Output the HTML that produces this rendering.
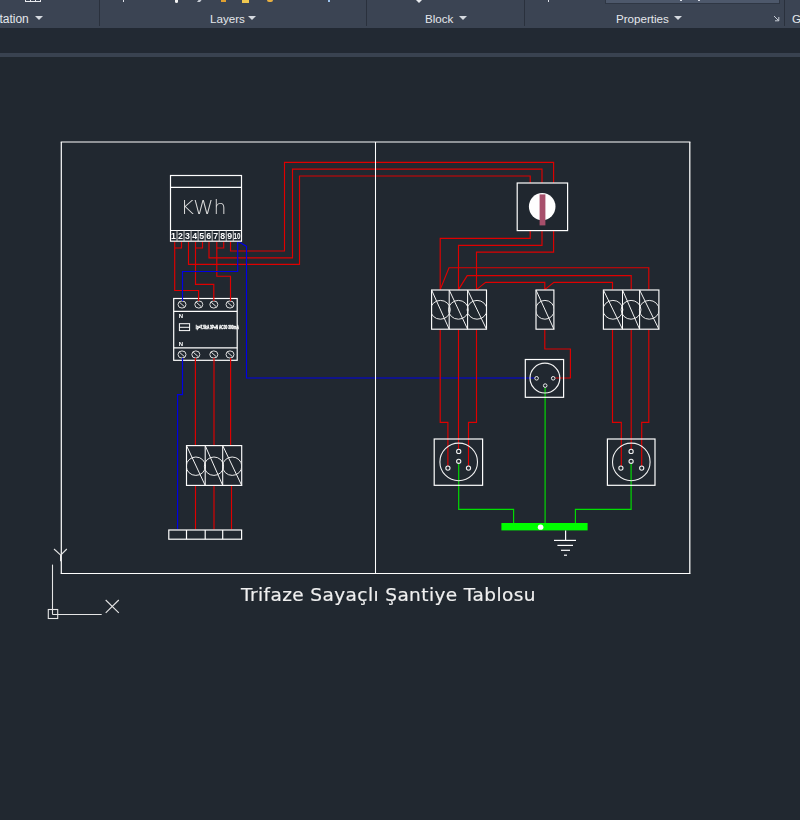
<!DOCTYPE html>
<html lang="tr"><head><meta charset="utf-8"><title>Trifaze Sayaçlı Şantiye Tablosu</title>
<style>
html,body{margin:0;padding:0}
body{width:800px;height:820px;overflow:hidden;background:#212830;position:relative;font-family:"Liberation Sans",sans-serif}
.rib{position:absolute;left:0;top:0;width:800px;height:28px;background:#3b4453}
.band{position:absolute;left:0;top:28px;width:800px;height:25px;background:#222933}
.strip{position:absolute;left:0;top:53px;width:800px;height:4px;background:#394250}
.lbl{position:absolute;top:10.5px;font-size:11.6px;line-height:16px;color:#e4e7ec;white-space:nowrap}
.arr{position:absolute;top:16px;width:0;height:0;border-left:4px solid transparent;border-right:4px solid transparent;border-top:4.5px solid #d6dae0}
.sep{position:absolute;top:0;width:1px;height:26px;background:#2a313d}
.ico{position:absolute;top:0}
</style></head><body>
<div class="rib">
<span class="lbl" style="left:-28.6px;font-size:12px">Annotation</span><i class="arr" style="left:35px"></i>
<div class="sep" style="left:99px"></div>
<span class="lbl" style="left:210px">Layers</span><i class="arr" style="left:248px"></i>
<div class="sep" style="left:366px"></div>
<span class="lbl" style="left:425px">Block</span><i class="arr" style="left:459px"></i>
<div class="sep" style="left:524px"></div>
<span class="lbl" style="left:616px">Properties</span><i class="arr" style="left:674px"></i>
<div class="sep" style="left:784px"></div>
<span class="lbl" style="left:792px">Groups</span>
<div class="ico" style="left:605px;width:175px;height:4px;background:#4d586b;border:1px solid #2f3744;border-top:0;box-sizing:border-box"></div>
<div class="ico" style="left:680px;width:2px;height:1px;background:#dfe3ea"></div>
<div class="ico" style="left:698px;width:2px;height:1px;background:#dfe3ea"></div>
<div class="ico" style="left:25px;width:16px;height:2px;border:1px solid #e8eaee;border-top:0;box-sizing:border-box"></div>
<div class="ico" style="left:30px;width:1px;height:1px;background:#e8eaee"></div><div class="ico" style="left:35px;width:1px;height:1px;background:#e8eaee"></div>
<div class="ico" style="left:123px;width:1px;height:2px;background:#dfe3ea"></div>
<div class="ico" style="left:175px;width:3px;height:3px;background:#f2f2f2;border-radius:0 0 2px 2px"></div>
<div class="ico" style="left:198px;width:3px;height:1.5px;background:#c9ced6;transform:skewX(-40deg)"></div>
<div class="ico" style="left:221px;width:5px;height:1.5px;background:#e0a030"></div>
<div class="ico" style="left:242px;width:7px;height:3px;background:#f0c850"></div>
<div class="ico" style="left:267px;width:6px;height:2px;background:#e8b040;border-radius:0 0 2px 2px"></div>
<div class="ico" style="left:328px;width:2px;height:1.5px;background:#9cc4f0"></div>
<div class="ico" style="left:416px;width:0;height:0;border-left:3px solid transparent;border-right:3px solid transparent;border-top:3px solid #e8eaee"></div>
<div class="ico" style="left:548px;width:1px;height:2px;background:#dfe3ea"></div>
<svg class="ico" style="left:773px;top:15px" width="7" height="7" viewBox="0 0 7 7"><path d="M1 1 L5.5 5.5 M5.8 2 V5.8 H2" fill="none" stroke="#c8cdd6" stroke-width="1"/></svg>
</div>
<div class="band"></div><div class="strip"></div>
<svg width="800" height="820" viewBox="0 0 800 820" style="position:absolute;left:0;top:0;will-change:transform;opacity:0.999">
<polyline points="230.5,241.6 230.5,251 284.5,251 284.5,162.3 553.6,162.3 553.6,183" fill="none" stroke="#e00000" stroke-width="1.15" />
<polyline points="209,241.6 209,257.9 292.5,257.9 292.5,169.1 542,169.1 542,183" fill="none" stroke="#e00000" stroke-width="1.15" />
<polyline points="188.5,241.6 188.5,264.4 299.5,264.4 299.5,176 530.2,176 530.2,183" fill="none" stroke="#e00000" stroke-width="1.15" />
<polyline points="174.7,241.6 174.7,290.5 198.6,290.5 198.6,298" fill="none" stroke="#e00000" stroke-width="1.15" />
<polyline points="181.5,241.6 181.5,248 174.7,248" fill="none" stroke="#e00000" stroke-width="1.15" />
<polyline points="195.5,241.6 195.5,284.3 213.8,284.3 213.8,298" fill="none" stroke="#e00000" stroke-width="1.15" />
<polyline points="202.5,241.6 202.5,248 195.5,248" fill="none" stroke="#e00000" stroke-width="1.15" />
<polyline points="216.8,241.6 216.8,276.2 230.5,276.2 230.5,298" fill="none" stroke="#e00000" stroke-width="1.15" />
<polyline points="223.7,241.6 223.7,248 216.8,248" fill="none" stroke="#e00000" stroke-width="1.15" />
<polyline points="237.7,241.6 237.7,271.5 182.5,271.5 182.5,298" fill="none" stroke="#0000e6" stroke-width="1.15" />
<polyline points="238.5,241.6 246.5,246.4 246.5,378 534.8,378" fill="none" stroke="#0000e6" stroke-width="1.15" />
<polyline points="182.5,360.6 182.5,394.6 177.6,394.6 177.6,529.6" fill="none" stroke="#0000e6" stroke-width="1.15" />
<polyline points="195.4,360.6 195.4,445" fill="none" stroke="#e00000" stroke-width="1.15" />
<polyline points="214,360.6 214,445" fill="none" stroke="#e00000" stroke-width="1.15" />
<polyline points="230.6,360.6 230.6,445" fill="none" stroke="#e00000" stroke-width="1.15" />
<polyline points="195.5,485.4 195.5,529.4" fill="none" stroke="#e00000" stroke-width="1.15" />
<polyline points="214,485.4 214,529.4" fill="none" stroke="#e00000" stroke-width="1.15" />
<polyline points="231.5,485.4 231.5,529.4" fill="none" stroke="#e00000" stroke-width="1.15" />
<polyline points="530.2,230.6 530.2,238.4 440.2,238.4 440.2,289.6" fill="none" stroke="#e00000" stroke-width="1.15" />
<polyline points="542,230.6 542,245.4 458.5,245.4 458.5,289.6" fill="none" stroke="#e00000" stroke-width="1.15" />
<polyline points="553.6,230.6 553.6,252.1 476.5,252.1 476.5,289.6" fill="none" stroke="#e00000" stroke-width="1.15" />
<polyline points="440.2,289.6 449,267.7 648.8,267.7 648.8,289.6" fill="none" stroke="#e00000" stroke-width="1.15" />
<polyline points="458.5,289.6 467.2,275.6 631.2,275.6 631.2,289.6" fill="none" stroke="#e00000" stroke-width="1.15" />
<polyline points="476.5,289.6 485.6,282.4 544.8,282.4 544.8,289.6 553.9,282.3 612.5,282.3 612.5,289.6" fill="none" stroke="#e00000" stroke-width="1.15" />
<polyline points="440.2,329.6 440.2,422.4 447.9,422.4 447.9,466" fill="none" stroke="#e00000" stroke-width="1.15" />
<polyline points="458.5,329.6 458.5,449.3" fill="none" stroke="#e00000" stroke-width="1.15" />
<polyline points="476.5,329.6 476.5,422.4 468.5,422.4 468.5,466" fill="none" stroke="#e00000" stroke-width="1.15" />
<polyline points="612.5,329.6 612.5,422.4 621.3,422.4 621.3,466" fill="none" stroke="#e00000" stroke-width="1.15" />
<polyline points="631.2,329.6 631.2,449.3" fill="none" stroke="#e00000" stroke-width="1.15" />
<polyline points="648.8,329.6 648.8,422.4 641.7,422.4 641.7,466" fill="none" stroke="#e00000" stroke-width="1.15" />
<polyline points="544.8,329.6 544.8,349 570.4,349 570.4,378 555.4,378" fill="none" stroke="#e00000" stroke-width="1.15" />
<polyline points="545.1,387.4 545.1,523" fill="none" stroke="#00e000" stroke-width="1.15" />
<polyline points="458.7,463.4 458.7,509.3 513.6,509.3 513.6,523" fill="none" stroke="#00e000" stroke-width="1.15" />
<polyline points="631.1,463.4 631.1,509.3 575.4,509.3 575.4,523" fill="none" stroke="#00e000" stroke-width="1.15" />
<rect x="501.4" y="523" width="86.2" height="7.4" fill="#00ff00"/>
<ellipse cx="540.6" cy="527.2" rx="2.8" ry="2.6" fill="#fff"/>
<line x1="565.6" y1="530.4" x2="565.6" y2="540.4" stroke="#ffffff" stroke-width="1.2"/>
<line x1="554" y1="540.4" x2="576" y2="540.4" stroke="#ffffff" stroke-width="1.2"/>
<line x1="557.4" y1="545.4" x2="573" y2="545.4" stroke="#ffffff" stroke-width="1.2"/>
<line x1="561" y1="550.3" x2="570" y2="550.3" stroke="#ffffff" stroke-width="1.2"/>
<line x1="564" y1="555.2" x2="567" y2="555.2" stroke="#ffffff" stroke-width="1.2"/>
<line x1="60.7" y1="142" x2="690.4" y2="142" stroke="#ffffff" stroke-width="1.2"/>
<line x1="61.3" y1="142" x2="61.3" y2="573.5" stroke="#ffffff" stroke-width="1.2"/>
<line x1="60.7" y1="573.5" x2="690.4" y2="573.5" stroke="#ffffff" stroke-width="1.05"/>
<line x1="689.8" y1="142" x2="689.8" y2="573.5" stroke="#ffffff" stroke-width="1.25"/>
<line x1="375.5" y1="142" x2="375.5" y2="573.5" stroke="#ffffff" stroke-width="1.05"/>
<rect x="170.5" y="175.5" width="71" height="65.7" fill="#212830" stroke="#ffffff" stroke-width="1.2"/>
<line x1="170.5" y1="187.3" x2="241.5" y2="187.3" stroke="#ffffff" stroke-width="1.2"/>
<line x1="170.5" y1="230.5" x2="241.5" y2="230.5" stroke="#ffffff" stroke-width="1.2"/>
<text x="180.6" y="214.2" font-family="DejaVu Sans Light, DejaVu Sans, Liberation Sans, sans-serif" font-weight="200" font-size="19" fill="#dcdcdc" textLength="46" lengthAdjust="spacingAndGlyphs">KWh</text>
<line x1="177.03" y1="230.5" x2="177.03" y2="241" stroke="#cfcfcf" stroke-width="1"/>
<line x1="184.06" y1="230.5" x2="184.06" y2="241" stroke="#cfcfcf" stroke-width="1"/>
<line x1="191.09" y1="230.5" x2="191.09" y2="241" stroke="#cfcfcf" stroke-width="1"/>
<line x1="198.12" y1="230.5" x2="198.12" y2="241" stroke="#cfcfcf" stroke-width="1"/>
<line x1="205.15" y1="230.5" x2="205.15" y2="241" stroke="#cfcfcf" stroke-width="1"/>
<line x1="212.18" y1="230.5" x2="212.18" y2="241" stroke="#cfcfcf" stroke-width="1"/>
<line x1="219.21" y1="230.5" x2="219.21" y2="241" stroke="#cfcfcf" stroke-width="1"/>
<line x1="226.24" y1="230.5" x2="226.24" y2="241" stroke="#cfcfcf" stroke-width="1"/>
<line x1="233.27" y1="230.5" x2="233.27" y2="241" stroke="#cfcfcf" stroke-width="1"/>
<text x="173.5" y="239.4" font-family="Liberation Sans, sans-serif" font-size="8.8" font-weight="bold" fill="#fff" text-anchor="middle">1</text>
<text x="180.53" y="239.4" font-family="Liberation Sans, sans-serif" font-size="8.8" font-weight="bold" fill="#fff" text-anchor="middle">2</text>
<text x="187.56" y="239.4" font-family="Liberation Sans, sans-serif" font-size="8.8" font-weight="bold" fill="#fff" text-anchor="middle">3</text>
<text x="194.59" y="239.4" font-family="Liberation Sans, sans-serif" font-size="8.8" font-weight="bold" fill="#fff" text-anchor="middle">4</text>
<text x="201.62" y="239.4" font-family="Liberation Sans, sans-serif" font-size="8.8" font-weight="bold" fill="#fff" text-anchor="middle">5</text>
<text x="208.65" y="239.4" font-family="Liberation Sans, sans-serif" font-size="8.8" font-weight="bold" fill="#fff" text-anchor="middle">6</text>
<text x="215.68" y="239.4" font-family="Liberation Sans, sans-serif" font-size="8.8" font-weight="bold" fill="#fff" text-anchor="middle">7</text>
<text x="222.71" y="239.4" font-family="Liberation Sans, sans-serif" font-size="8.8" font-weight="bold" fill="#fff" text-anchor="middle">8</text>
<text x="229.74" y="239.4" font-family="Liberation Sans, sans-serif" font-size="8.8" font-weight="bold" fill="#fff" text-anchor="middle">9</text>
<text x="233.6" y="239.4" font-family="Liberation Sans, sans-serif" font-size="8.8" font-weight="bold" fill="#fff" textLength="7" lengthAdjust="spacingAndGlyphs">10</text>
<rect x="173.7" y="298.5" width="63.5" height="61.8" fill="#212830" stroke="#ffffff" stroke-width="1.2"/>
<line x1="173.7" y1="311.3" x2="237.2" y2="311.3" stroke="#ffffff" stroke-width="1.2"/>
<line x1="173.7" y1="347.8" x2="237.2" y2="347.8" stroke="#ffffff" stroke-width="1.2"/>
<ellipse cx="182" cy="304.5" rx="4" ry="3.6" fill="none" stroke="#e0e0e0" stroke-width="1"/>
<line x1="179.4" y1="302.2" x2="184.6" y2="306.8" stroke="#e0e0e0" stroke-width="1"/>
<ellipse cx="198.8" cy="304.5" rx="4" ry="3.6" fill="none" stroke="#e0e0e0" stroke-width="1"/>
<line x1="196.2" y1="302.2" x2="201.4" y2="306.8" stroke="#e0e0e0" stroke-width="1"/>
<ellipse cx="213.8" cy="304.5" rx="4" ry="3.6" fill="none" stroke="#e0e0e0" stroke-width="1"/>
<line x1="211.2" y1="302.2" x2="216.4" y2="306.8" stroke="#e0e0e0" stroke-width="1"/>
<ellipse cx="230" cy="304.5" rx="4" ry="3.6" fill="none" stroke="#e0e0e0" stroke-width="1"/>
<line x1="227.4" y1="302.2" x2="232.6" y2="306.8" stroke="#e0e0e0" stroke-width="1"/>
<ellipse cx="182" cy="354.5" rx="4" ry="3.6" fill="none" stroke="#e0e0e0" stroke-width="1"/>
<line x1="179.4" y1="352.2" x2="184.6" y2="356.8" stroke="#e0e0e0" stroke-width="1"/>
<ellipse cx="195.8" cy="354.5" rx="4" ry="3.6" fill="none" stroke="#e0e0e0" stroke-width="1"/>
<line x1="193.2" y1="352.2" x2="198.4" y2="356.8" stroke="#e0e0e0" stroke-width="1"/>
<ellipse cx="213.8" cy="354.5" rx="4" ry="3.6" fill="none" stroke="#e0e0e0" stroke-width="1"/>
<line x1="211.2" y1="352.2" x2="216.4" y2="356.8" stroke="#e0e0e0" stroke-width="1"/>
<ellipse cx="230" cy="354.5" rx="4" ry="3.6" fill="none" stroke="#e0e0e0" stroke-width="1"/>
<line x1="227.4" y1="352.2" x2="232.6" y2="356.8" stroke="#e0e0e0" stroke-width="1"/>
<polyline points="182.5,297 182.5,301" fill="none" stroke="#0000e6" stroke-width="1.15" />
<polyline points="198.6,297 198.6,301" fill="none" stroke="#e00000" stroke-width="1.15" />
<polyline points="213.8,297 213.8,301" fill="none" stroke="#e00000" stroke-width="1.15" />
<polyline points="230.5,297 230.5,301" fill="none" stroke="#e00000" stroke-width="1.15" />
<polyline points="182.5,358 182.5,361" fill="none" stroke="#0000e6" stroke-width="1.15" />
<polyline points="195.4,358 195.4,361" fill="none" stroke="#e00000" stroke-width="1.15" />
<polyline points="214,358 214,361" fill="none" stroke="#e00000" stroke-width="1.15" />
<polyline points="230.6,358 230.6,361" fill="none" stroke="#e00000" stroke-width="1.15" />
<text x="178.8" y="317.6" font-family="Liberation Sans, sans-serif" font-size="6" font-weight="bold" fill="#fff">N</text>
<text x="178.8" y="345.5" font-family="Liberation Sans, sans-serif" font-size="6" font-weight="bold" fill="#fff">N</text>
<rect x="179.4" y="323.7" width="10.2" height="6.9" fill="none" stroke="#ffffff" stroke-width="1"/>
<line x1="179.4" y1="327.3" x2="189.6" y2="327.3" stroke="#ffffff" stroke-width="1"/>
<text x="195.8" y="328.5" font-family="Liberation Sans, sans-serif" font-size="4.6" font-weight="bold" fill="#fff" stroke="#fff" stroke-width="0.35" textLength="43" lengthAdjust="spacingAndGlyphs">Ip=7.5kA 3P+N AC30 300mA</text>
<rect x="186.5" y="445.6" width="55.2" height="39.8" fill="#212830" stroke="#ffffff" stroke-width="1.15"/>
<clipPath id="c1865_445"><rect x="186.5" y="445.6" width="55.2" height="39.8"/></clipPath>
<ellipse cx="195.85" cy="466.2" rx="9.6" ry="9.2" fill="none" stroke="#ececec" stroke-width="1" clip-path="url(#c1865_445)"/>
<line x1="186.5" y1="445.6" x2="205.2" y2="485.4" stroke="#f4f4f4" stroke-width="1"/>
<line x1="205.2" y1="445.6" x2="205.2" y2="485.4" stroke="#ffffff" stroke-width="1.05"/>
<ellipse cx="213.95" cy="466.2" rx="9.6" ry="9.2" fill="none" stroke="#ececec" stroke-width="1" clip-path="url(#c1865_445)"/>
<line x1="205.2" y1="445.6" x2="222.7" y2="485.4" stroke="#f4f4f4" stroke-width="1"/>
<line x1="222.7" y1="445.6" x2="222.7" y2="485.4" stroke="#ffffff" stroke-width="1.05"/>
<ellipse cx="232.2" cy="466.2" rx="9.6" ry="9.2" fill="none" stroke="#ececec" stroke-width="1" clip-path="url(#c1865_445)"/>
<line x1="222.7" y1="445.6" x2="241.7" y2="485.4" stroke="#f4f4f4" stroke-width="1"/>
<rect x="168.8" y="530" width="72.8" height="9.2" fill="none" stroke="#ffffff" stroke-width="1.2"/>
<line x1="186.5" y1="530" x2="186.5" y2="539.2" stroke="#ffffff" stroke-width="1.2"/>
<line x1="205.2" y1="530" x2="205.2" y2="539.2" stroke="#ffffff" stroke-width="1.2"/>
<line x1="222.7" y1="530" x2="222.7" y2="539.2" stroke="#ffffff" stroke-width="1.2"/>
<rect x="517.2" y="183" width="50.4" height="47.6" fill="#212830" stroke="#ffffff" stroke-width="1.2"/>
<ellipse cx="542.2" cy="206.6" rx="13.3" ry="13.6" fill="#fff"/>
<rect x="539.6" y="194.4" width="5.8" height="31" fill="#a8506c"/>
<rect x="431.6" y="290" width="54.9" height="39.2" fill="#212830" stroke="#ffffff" stroke-width="1.15"/>
<clipPath id="c4316_290"><rect x="431.6" y="290" width="54.9" height="39.2"/></clipPath>
<ellipse cx="440.4" cy="309.8" rx="9.9" ry="9.4" fill="none" stroke="#ececec" stroke-width="1" clip-path="url(#c4316_290)"/>
<line x1="431.6" y1="290" x2="449.2" y2="329.2" stroke="#f4f4f4" stroke-width="1"/>
<line x1="449.2" y1="290" x2="449.2" y2="329.2" stroke="#ffffff" stroke-width="1.05"/>
<ellipse cx="458.4" cy="309.8" rx="9.9" ry="9.4" fill="none" stroke="#ececec" stroke-width="1" clip-path="url(#c4316_290)"/>
<line x1="449.2" y1="290" x2="467.6" y2="329.2" stroke="#f4f4f4" stroke-width="1"/>
<line x1="467.6" y1="290" x2="467.6" y2="329.2" stroke="#ffffff" stroke-width="1.05"/>
<ellipse cx="477.05" cy="309.8" rx="9.9" ry="9.4" fill="none" stroke="#ececec" stroke-width="1" clip-path="url(#c4316_290)"/>
<line x1="467.6" y1="290" x2="486.5" y2="329.2" stroke="#f4f4f4" stroke-width="1"/>
<rect x="536" y="290" width="17.9" height="39.2" fill="#212830" stroke="#ffffff" stroke-width="1.15"/>
<clipPath id="c5360_290"><rect x="536" y="290" width="17.9" height="39.2"/></clipPath>
<ellipse cx="544.95" cy="309.8" rx="9.4" ry="9.4" fill="none" stroke="#ececec" stroke-width="1" clip-path="url(#c5360_290)"/>
<line x1="536" y1="290" x2="553.9" y2="329.2" stroke="#f4f4f4" stroke-width="1"/>
<rect x="603.4" y="290" width="55.5" height="39.2" fill="#212830" stroke="#ffffff" stroke-width="1.15"/>
<clipPath id="c6034_290"><rect x="603.4" y="290" width="55.5" height="39.2"/></clipPath>
<ellipse cx="612.95" cy="309.8" rx="9.9" ry="9.4" fill="none" stroke="#ececec" stroke-width="1" clip-path="url(#c6034_290)"/>
<line x1="603.4" y1="290" x2="622.5" y2="329.2" stroke="#f4f4f4" stroke-width="1"/>
<line x1="622.5" y1="290" x2="622.5" y2="329.2" stroke="#ffffff" stroke-width="1.05"/>
<ellipse cx="631.05" cy="309.8" rx="9.9" ry="9.4" fill="none" stroke="#ececec" stroke-width="1" clip-path="url(#c6034_290)"/>
<line x1="622.5" y1="290" x2="639.6" y2="329.2" stroke="#f4f4f4" stroke-width="1"/>
<line x1="639.6" y1="290" x2="639.6" y2="329.2" stroke="#ffffff" stroke-width="1.05"/>
<ellipse cx="649.25" cy="309.8" rx="9.9" ry="9.4" fill="none" stroke="#ececec" stroke-width="1" clip-path="url(#c6034_290)"/>
<line x1="639.6" y1="290" x2="658.9" y2="329.2" stroke="#f4f4f4" stroke-width="1"/>
<rect x="525.3" y="359.5" width="38.3" height="37.8" fill="none" stroke="#ffffff" stroke-width="1.2"/>
<circle cx="544.9" cy="378.1" r="14.9" fill="none" stroke="#f4f4f4" stroke-width="1.2"/>
<circle cx="536.6" cy="378.3" r="1.8" fill="none" stroke="#f0f0f0" stroke-width="1"/>
<circle cx="553.2" cy="378.3" r="1.8" fill="none" stroke="#f0f0f0" stroke-width="1"/>
<circle cx="545.2" cy="385.6" r="1.8" fill="none" stroke="#f0f0f0" stroke-width="1"/>
<rect x="434.2" y="439" width="48.4" height="46.3" fill="none" stroke="#ffffff" stroke-width="1.2"/>
<circle cx="458.7" cy="461.9" r="18.8" fill="none" stroke="#f0f0f0" stroke-width="1.1"/>
<circle cx="458.7" cy="451.4" r="2.1" fill="none" stroke="#f0f0f0" stroke-width="1.1"/>
<circle cx="458.7" cy="461.3" r="2.1" fill="none" stroke="#f0f0f0" stroke-width="1.1"/>
<circle cx="447.9" cy="468.1" r="2.1" fill="none" stroke="#f0f0f0" stroke-width="1.1"/>
<circle cx="468.5" cy="468.1" r="2.1" fill="none" stroke="#f0f0f0" stroke-width="1.1"/>
<rect x="607.4" y="439" width="47.6" height="46.3" fill="none" stroke="#ffffff" stroke-width="1.2"/>
<circle cx="631.3" cy="461.9" r="18.8" fill="none" stroke="#f0f0f0" stroke-width="1.1"/>
<circle cx="631.1" cy="451.4" r="2.1" fill="none" stroke="#f0f0f0" stroke-width="1.1"/>
<circle cx="631.1" cy="461.3" r="2.1" fill="none" stroke="#f0f0f0" stroke-width="1.1"/>
<circle cx="620.9" cy="468.1" r="2.1" fill="none" stroke="#f0f0f0" stroke-width="1.1"/>
<circle cx="641.7" cy="468.1" r="2.1" fill="none" stroke="#f0f0f0" stroke-width="1.1"/>
<text x="241" y="601.1" font-family="DejaVu Sans, Liberation Sans, sans-serif" font-size="18.5" fill="#f0f0f0" stroke="#f0f0f0" stroke-width="0.2" textLength="294.4" lengthAdjust="spacing">Trifaze Sayaçlı Şantiye Tablosu</text>
<line x1="52.5" y1="564.6" x2="52.5" y2="614.5" stroke="#e6e6e6" stroke-width="1.1"/>
<line x1="52.5" y1="614.5" x2="101.7" y2="614.5" stroke="#e6e6e6" stroke-width="1.1"/>
<rect x="48.3" y="609.5" width="9.4" height="9" fill="none" stroke="#e6e6e6" stroke-width="1.1"/>
<line x1="54" y1="549" x2="60.7" y2="555.2" stroke="#e6e6e6" stroke-width="1.1"/>
<line x1="66.8" y1="549" x2="60.7" y2="555.2" stroke="#e6e6e6" stroke-width="1.1"/>
<line x1="60.7" y1="555" x2="60.7" y2="561.2" stroke="#e6e6e6" stroke-width="1.4"/>
<line x1="105.7" y1="600" x2="118.8" y2="612.8" stroke="#e6e6e6" stroke-width="1.1"/>
<line x1="118.8" y1="600" x2="105.7" y2="612.8" stroke="#e6e6e6" stroke-width="1.1"/>
</svg>
</body></html>
